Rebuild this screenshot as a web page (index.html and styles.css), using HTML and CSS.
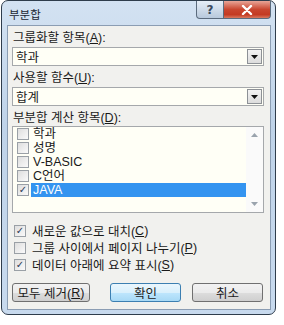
FILE: index.html
```html
<!DOCTYPE html>
<html>
<head>
    <title>부분합</title>
    <link rel="stylesheet" href="styles.css">
</head>
<body>
<div class="window">
    <div class="titlebar">
        <span class="title">부분합</span>
        <div class="caption-buttons">
            <span class="cap-btn help">?</span>
            <span class="cap-btn close">
                <svg width="12" height="10" viewBox="0 0 12 10"><path d="M2 1 L10 9 M10 1 L2 9" stroke="#fff" stroke-width="2.4" stroke-linecap="round"/></svg>
            </span>
        </div>
    </div>
    <div class="client">
        <div class="label">그룹화할 항목(<u>A</u>):</div>
        <div class="combo">
            <span class="combo-text">학과</span>
            <span class="drop-btn"><svg width="7" height="4" viewBox="0 0 7 4"><path d="M0 0 H7 L3.5 4 Z" fill="#111"/></svg></span>
        </div>
        <div class="label">사용할 함수(<u>U</u>):</div>
        <div class="combo">
            <span class="combo-text">합계</span>
            <span class="drop-btn"><svg width="7" height="4" viewBox="0 0 7 4"><path d="M0 0 H7 L3.5 4 Z" fill="#111"/></svg></span>
        </div>
        <div class="label">부분합 계산 항목(<u>D</u>):</div>
        <div class="listbox">
            <div class="list-items">
                <div class="list-item"><span class="check"></span><span class="item-text">학과</span></div>
                <div class="list-item"><span class="check"></span><span class="item-text">성명</span></div>
                <div class="list-item"><span class="check"></span><span class="item-text">V-BASIC</span></div>
                <div class="list-item"><span class="check"></span><span class="item-text">C언어</span></div>
                <div class="list-item selected"><span class="check checked">&#10003;</span><span class="item-text">JAVA</span></div>
            </div>
            <div class="scrollbar">
                <svg width="7" height="4" viewBox="0 0 7 4"><path d="M0 4 H7 L3.5 0 Z" fill="#9aa3ad"/></svg>
                <svg width="7" height="4" viewBox="0 0 7 4"><path d="M0 0 H7 L3.5 4 Z" fill="#9aa3ad"/></svg>
            </div>
        </div>
        <div class="options">
            <div class="option"><span class="check checked">&#10003;</span>새로운 값으로 대치(<u>C</u>)</div>
            <div class="option"><span class="check"></span>그룹 사이에서 페이지 나누기(<u>P</u>)</div>
            <div class="option"><span class="check checked">&#10003;</span>데이터 아래에 요약 표시(<u>S</u>)</div>
        </div>
        <div class="buttons">
            <span class="button remove">모두 제거(<u>R</u>)</span>
            <span class="button default">확인</span>
            <span class="button cancel">취소</span>
        </div>
    </div>
</div>
</body>
</html>
```

FILE: styles.css
```css
body {
margin: 0;
background: #fff;
font-family: "Liberation Sans", "Noto Sans CJK KR", sans-serif;
font-size: 12.5px;
color: #1a1a1a;
}

.window {
width: 275px;
height: 315px;
margin: 0 0 0 1px;
box-sizing: border-box;
border: 1px solid #2f3d4c;
border-radius: 7px;
background: linear-gradient(to bottom, #d3e2f2, #bfd3e9 40%, #c8daee);
padding: 0 4px 4px 5px;
display: flex;
flex-direction: column;
}

.titlebar {
height: 24px;
display: flex;
align-items: flex-start;
justify-content: space-between;
}

.title {
margin: 5px 0 0 2px;
font-size: 11.5px;
color: #1b2633;
}

.caption-buttons {
display: flex;
}

.cap-btn {
height: 18px;
display: flex;
align-items: center;
justify-content: center;
border: 1px solid #5b6b7d;
border-top: none;
box-sizing: border-box;
}

.help {
width: 28px;
border-radius: 0 0 0 4px;
background: linear-gradient(to bottom, #e6eef7, #b8c9dc);
color: #3a4a5e;
font-family: "DejaVu Sans", sans-serif;
font-size: 12px;
font-weight: bold;
}

.close {
width: 47px;
border-left: none;
border-radius: 0 0 4px 0;
background: linear-gradient(to bottom, #e8a597, #c9462f 50%, #c33a22 80%, #d9785f);
}

.client {
flex: 1;
background: #f1f1ee;
border: 1px solid #8b9db3;
padding: 3px 6px 0 4px;
}

.label {
height: 18px;
line-height: 18px;
padding-left: 1px;
}

.combo {
height: 19px;
box-sizing: border-box;
border: 1px solid #a5a8ab;
background: #fffff6;
display: flex;
align-items: center;
justify-content: space-between;
margin-bottom: 3px;
}

.combo-text {
padding-left: 3px;
}

.drop-btn {
width: 15px;
height: 15px;
margin-right: 1px;
border: 1px solid #8d9196;
box-sizing: border-box;
background: linear-gradient(to bottom, #f4f4f4, #dcdcdc);
display: flex;
align-items: center;
justify-content: center;
}

.listbox {
height: 87px;
box-sizing: border-box;
border: 1px solid #a5a8ab;
background: #fffff6;
display: flex;
margin-top: -1px;
}

.list-items {
flex: 1;
}

.list-item {
height: 14px;
display: flex;
align-items: center;
}

.item-text {
flex: 1;
height: 14px;
line-height: 14px;
padding-left: 2px;
}

.selected .item-text {
background: #3494f0;
color: #fff;
}

.check {
width: 12px;
height: 12px;
box-sizing: border-box;
border: 1px solid #9aa0a6;
background: linear-gradient(135deg, #dedede, #fafafa);
margin: 0 2px 0 4px;
display: inline-flex;
align-items: center;
justify-content: center;
font-size: 10px;
line-height: 1;
color: #2b3a55;
font-family: "DejaVu Sans", sans-serif;
}

.scrollbar {
width: 17px;
display: flex;
flex-direction: column;
justify-content: space-between;
align-items: center;
padding: 6px 0;
background: #fafafa;
}

.options {
margin-top: 9px;
}

.option {
height: 17px;
display: flex;
align-items: center;
}

.option .check {
margin: 0 6px 0 2px;
}

.buttons {
display: flex;
margin-top: 10px;
}

.button {
height: 19px;
box-sizing: border-box;
border: 1px solid #707070;
border-radius: 3px;
background: linear-gradient(to bottom, #f2f2f2, #ebebeb 50%, #dddddd 51%, #cfcfcf);
display: flex;
align-items: center;
justify-content: center;
}

.remove {
width: 78px;
}

.default {
width: 71px;
margin-left: 20px;
border-color: #3c7fb1;
background: linear-gradient(to bottom, #eaf6fd, #d9f0fc 50%, #bee6fd 51%, #a7d9f5);
}

.cancel {
width: 71px;
margin-left: 11px;
}
```
